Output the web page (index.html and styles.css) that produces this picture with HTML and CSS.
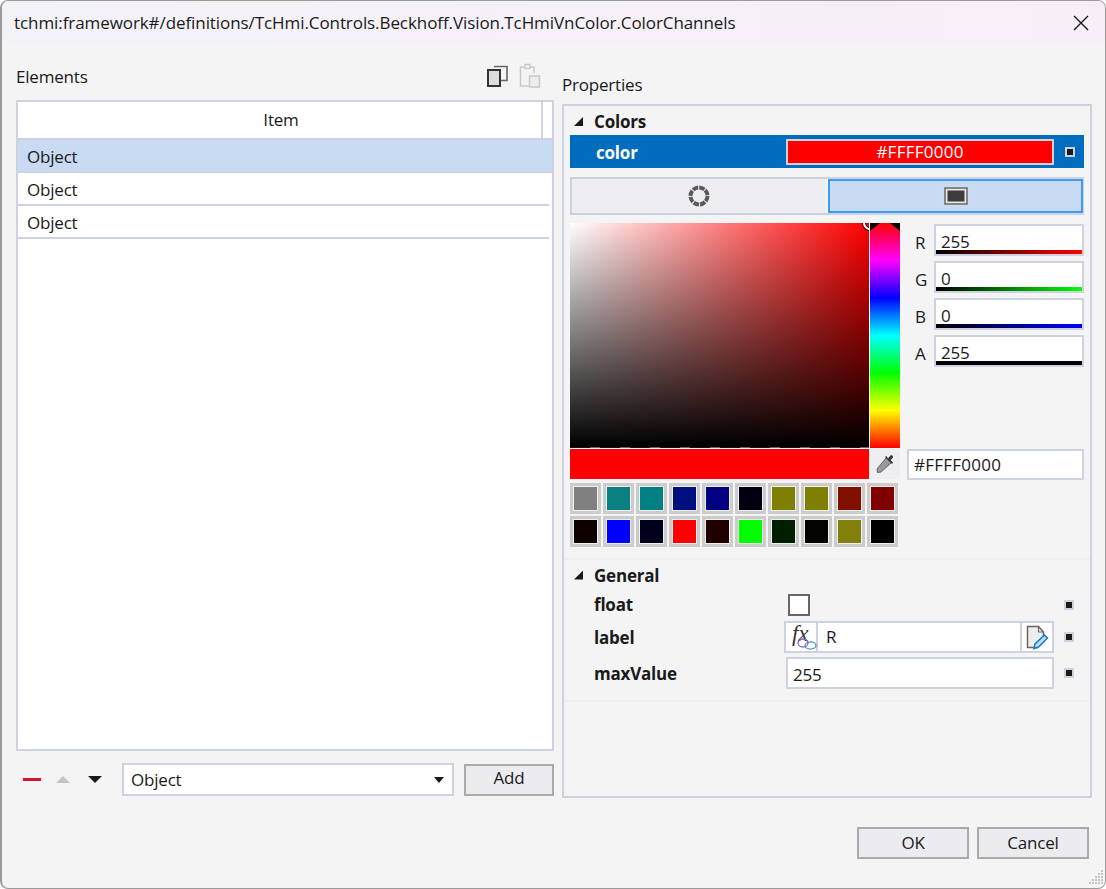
FILE: index.html
```html
<!DOCTYPE html>
<html lang="en">
<head>
    <meta charset="UTF-8">
    <title>ColorChannels</title>
    <link rel="stylesheet" href="styles.css">
</head>
<body>
    <div class="window">
        <div class="titlebar">
            <span class="title">tchmi:framework#/definitions/TcHmi.Controls.Beckhoff.Vision.TcHmiVnColor.ColorChannels</span>
            <svg class="close" width="16" height="16" viewBox="0 0 16 16"><path d="M1 1L15 15M15 1L1 15" stroke="#1a1a1a" stroke-width="1.4" fill="none"/></svg>
        </div>

        <div class="main">
            <div class="left">
                <div class="left-head">
                    <span class="caption">Elements</span>
                    <div class="head-icons">
                        <svg width="22" height="22" viewBox="0 0 22 22"><path d="M7 1.5H20V15.5H14" stroke="#666" stroke-width="1.6" fill="#f4f4f4"/><rect x="1" y="5" width="12" height="16" fill="#ddd" stroke="#333" stroke-width="2"/></svg>
                        <svg width="22" height="25" viewBox="0 0 22 25"><path d="M6 4H1.5V23H10M15 10V4H11" stroke="#c8c8c8" stroke-width="1.5" fill="none"/><rect x="6" y="1.5" width="5" height="4" fill="none" stroke="#c8c8c8" stroke-width="1.5"/><rect x="10.5" y="13" width="10" height="11" fill="#ececec" stroke="#c8c8c8" stroke-width="1.5"/></svg>
                    </div>
                </div>
                <div class="list">
                    <div class="list-header">
                        <div class="list-col">Item</div>
                        <div class="list-rest"></div>
                    </div>
                    <div class="list-row selected">Object</div>
                    <div class="list-row">Object</div>
                    <div class="list-row">Object</div>
                </div>
                <div class="left-foot">
                    <span class="minus"></span>
                    <span class="arrow-up"></span>
                    <span class="arrow-down"></span>
                    <div class="select">Object<span class="select-caret"></span></div>
                    <button class="btn btn-add">Add</button>
                </div>
            </div>

            <div class="right">
                <div class="caption right-caption">Properties</div>
                <div class="props">
                    <div class="group-head"><span class="tri"></span>Colors</div>
                    <div class="color-row">
                        <span class="prop-name">color</span>
                        <div class="color-value">#FFFF0000</div>
                        <span class="mark mark-blue"></span>
                    </div>
                    <div class="tabs">
                        <div class="tab">
                            <svg width="24" height="24" viewBox="0 0 24 24"><circle cx="12" cy="12" r="8.5" fill="none" stroke="#5a5a5a" stroke-width="4" stroke-dasharray="5.6 1.07"/></svg>
                        </div>
                        <div class="tab tab-active">
                            <svg width="26" height="20" viewBox="0 0 26 20"><rect x="0.5" y="0.5" width="25" height="19" fill="#dcdcdc"/><rect x="2" y="2" width="22" height="16" fill="#e8e8e8" stroke="#666" stroke-width="1.5"/><rect x="4.5" y="4.5" width="17" height="11" fill="#3c3c3c"/></svg>
                        </div>
                    </div>
                    <div class="picker">
                        <div class="sv">
                            <span class="sv-cursor"></span>
                        </div>
                        <div class="sv-gap"></div>
                        <div class="hue"></div>
                        <div class="channels">
                            <div class="channel"><span class="ch-label">R</span><div class="ch-input">255<span class="track track-r"></span></div></div>
                            <div class="channel"><span class="ch-label">G</span><div class="ch-input">0<span class="track track-g"></span></div></div>
                            <div class="channel"><span class="ch-label">B</span><div class="ch-input">0<span class="track track-b"></span></div></div>
                            <div class="channel"><span class="ch-label">A</span><div class="ch-input">255<span class="track track-a"></span></div></div>
                        </div>
                        <div class="preview"></div>
                        <div class="dropper">
                            <svg width="20" height="20" viewBox="0 0 20 20"><path d="M11 4L16 9L6 18L2.5 18.5L2 15Z" fill="#999" stroke="#666" stroke-width="1"/><path d="M10 3L17 10L18 8.5L15.5 6L18 3.5C18.5 2 17 0.5 15.5 1.5L13 4.5L11.5 2Z" fill="#333"/></svg>
                        </div>
                        <div class="hex-input">#FFFF0000</div>
                    </div>
                    <div class="swatches">
                        <span class="swatch" style="background-color:#808080"></span>
                        <span class="swatch" style="background-color:#0a8080"></span>
                        <span class="swatch" style="background-color:#008080"></span>
                        <span class="swatch" style="background-color:#000f80"></span>
                        <span class="swatch" style="background-color:#000080"></span>
                        <span class="swatch" style="background-color:#00000f"></span>
                        <span class="swatch" style="background-color:#808000"></span>
                        <span class="swatch" style="background-color:#808000"></span>
                        <span class="swatch" style="background-color:#800f00"></span>
                        <span class="swatch" style="background-color:#800000"></span>
                        <span class="swatch" style="background-color:#0f0000"></span>
                        <span class="swatch" style="background-color:#0000ff"></span>
                        <span class="swatch" style="background-color:#00001a"></span>
                        <span class="swatch" style="background-color:#ff0000"></span>
                        <span class="swatch" style="background-color:#1f0000"></span>
                        <span class="swatch" style="background-color:#00ff00"></span>
                        <span class="swatch" style="background-color:#001f00"></span>
                        <span class="swatch" style="background-color:#050500"></span>
                        <span class="swatch" style="background-color:#80800a"></span>
                        <span class="swatch" style="background-color:#000000"></span>
                    </div>
                    <div class="group general">
                        <div class="group-head"><span class="tri"></span>General</div>
                        <div class="prop-row row-float">
                            <span class="prop-name">float</span>
                            <div class="prop-value"><span class="checkbox"></span></div>
                            <span class="mark"></span>
                        </div>
                        <div class="prop-row row-label">
                            <span class="prop-name">label</span>
                            <div class="prop-value label-value">
                                <div class="fx-cell">
                                    <span class="fx">fx</span>
                                    <svg class="fx-links" width="20" height="13" viewBox="0 0 20 13"><ellipse cx="6" cy="5" rx="5" ry="4" fill="none" stroke="#8a5fc0" stroke-width="1.3"/><ellipse cx="13.5" cy="7.5" rx="5.5" ry="3.6" fill="none" stroke="#4a90d0" stroke-width="1.3"/></svg>
                                </div>
                                <div class="label-text">R</div>
                                <div class="doc-cell">
                                    <svg width="24" height="26" viewBox="0 0 24 26"><path d="M13 23.5H2.5V2.5H13.5L18.5 8V14" fill="#eee" stroke="#666" stroke-width="1.5"/><path d="M13.5 2.5V8H18.5" fill="none" stroke="#666" stroke-width="1.2"/><path d="M9 24.5L10 20L19.5 11L22.5 14L13.5 23Z" fill="#bcdcf5" stroke="#1a78c8" stroke-width="1.5"/></svg>
                                </div>
                            </div>
                            <span class="mark"></span>
                        </div>
                        <div class="prop-row row-max">
                            <span class="prop-name">maxValue</span>
                            <div class="prop-value max-value">255</div>
                            <span class="mark"></span>
                        </div>
                    </div>
                </div>
            </div>
        </div>

        <div class="footer">
            <button class="btn btn-foot">OK</button>
            <button class="btn btn-foot">Cancel</button>
        </div>
        <svg class="grip" width="15" height="15" viewBox="0 0 15 15" fill="#c4c4c4">
            <rect x="12" y="0" width="2" height="2"/>
            <rect x="9" y="3" width="2" height="2"/><rect x="12" y="3" width="2" height="2"/>
            <rect x="6" y="6" width="2" height="2"/><rect x="9" y="6" width="2" height="2"/><rect x="12" y="6" width="2" height="2"/>
            <rect x="3" y="9" width="2" height="2"/><rect x="6" y="9" width="2" height="2"/><rect x="9" y="9" width="2" height="2"/><rect x="12" y="9" width="2" height="2"/>
            <rect x="0" y="12" width="2" height="2"/><rect x="3" y="12" width="2" height="2"/><rect x="6" y="12" width="2" height="2"/><rect x="9" y="12" width="2" height="2"/><rect x="12" y="12" width="2" height="2"/>
        </svg>
    </div>
</body>
</html>
```

FILE: styles.css
```css
*{
    padding: 0;
    margin: 0;
    box-sizing: border-box;
    font-family: "Open Sans", "Noto Sans", sans-serif;
}
body{
    width: 1106px;
    height: 889px;
    overflow: hidden;
    background: #fff;
    color: #1a1a1a;
    font-size: 17px;
    letter-spacing: -0.2px;
}
.window{
    position: relative;
    width: 1106px;
    height: 889px;
    background: #f4f4f4;
    border: 1px solid #9a9a9a;
    border-left-width: 2px;
    border-radius: 8px;
    overflow: hidden;
    display: flex;
    flex-direction: column;
}
.titlebar{
    height: 43px;
    flex: none;
    display: flex;
    align-items: center;
    justify-content: space-between;
    padding: 0 16px 0 12px;
    background: linear-gradient(90deg, #f3f2f7, #f8eef7);
}
.title{
    font-size: 17px;
    letter-spacing: -0.08px;
}
.main{
    display: flex;
    gap: 8px;
    padding-left: 14px;
}
.left{
    width: 538px;
}
.left-head{
    height: 56px;
    display: flex;
    align-items: flex-end;
    justify-content: space-between;
    padding-bottom: 11px;
}
.caption{
    line-height: 24px;
}
.head-icons{
    display: flex;
    gap: 10px;
    align-items: flex-end;
    padding-right: 13px;
    margin-bottom: 1px;
}
.head-icons svg:first-child{
    margin-bottom: 1px;
}
.list{
    height: 651px;
    border: 2px solid #cdd1e0;
    background: #fff;
}
.list-header{
    display: flex;
    height: 38px;
    border-bottom: 2px solid #cdd1e0;
}
.list-col{
    width: 525px;
    padding-left: 3px;
    text-align: center;
    line-height: 36px;
    border-right: 2px solid #cdd1e0;
}
.list-row{
    height: 33px;
    line-height: 33px;
    padding-left: 9px;
    margin-right: 3px;
    border-bottom: 2px solid #cdd1e0;
}
.list-row.selected{
    background: #c8dbf3;
    margin-right: 0;
}
.left-foot{
    height: 33px;
    margin-top: 12px;
    display: flex;
    align-items: center;
}
.minus{
    width: 18px;
    height: 3px;
    margin-left: 7px;
    background: #d2142e;
}
.arrow-up{
    margin-left: 15px;
    border: 7px solid transparent;
    border-top: 0;
    border-bottom: 7px solid #c4c4c4;
}
.arrow-down{
    margin-left: 18px;
    margin-right: 20px;
    border: 7px solid transparent;
    border-bottom: 0;
    border-top: 7px solid #1a1a1a;
}
.select{
    position: relative;
    width: 332px;
    height: 33px;
    line-height: 29px;
    padding-left: 7px;
    border: 2px solid #cdd1e0;
    background: #fff;
}
.select-caret{
    position: absolute;
    right: 8px;
    top: 12px;
    border: 5px solid transparent;
    border-bottom: 0;
    border-top: 6px solid #1a1a1a;
}
.btn{
    font-size: 17px;
    letter-spacing: -0.2px;
    color: #1a1a1a;
    background: #ecebf0;
    border: 2px solid #aaa;
}
.btn-add{
    width: 90px;
    height: 32px;
    margin-left: 10px;
    padding-bottom: 5px;
}
.right{
    width: 530px;
}
.right-caption{
    height: 60px;
    padding-top: 29px;
}
.props{
    height: 694px;
    border: 2px solid #cdd1e0;
    padding: 0 6px;
}
.group-head{
    height: 29px;
    display: flex;
    align-items: center;
    font-weight: 700;
    padding-top: 2px;
}
.general .group-head{
    padding-top: 1px;
}
.tri{
    width: 9px;
    height: 9px;
    margin: 0 11px 0 4px;
    background: #1a1a1a;
    clip-path: polygon(100% 0, 100% 100%, 0 100%);
}
.color-row{
    height: 33px;
    display: flex;
    align-items: center;
    padding-left: 26px;
    background: #006cbe;
    color: #fff;
}
.prop-name{
    font-weight: 700;
    width: 190px;
    flex: none;
}
.color-row .prop-name{
    padding-top: 2px;
}
.color-value{
    width: 268px;
    height: 26px;
    line-height: 22px;
    text-align: center;
    letter-spacing: 0.25px;
    background: #ff0000;
    border: 2px solid #cdd1e0;
    color: #fff;
}
.mark{
    width: 10px;
    height: 10px;
    margin-left: 10px;
    background: #1a1a1a;
    border: 2px solid #cdd1e0;
}
.mark-blue{
    margin-left: 11px;
}
.tabs{
    display: flex;
    height: 38px;
    margin-top: 9px;
    border: 2px solid #cdd1e0;
}
.tab{
    width: 254px;
    flex: none;
    display: flex;
    align-items: center;
    justify-content: center;
    background: #eeeef2;
}
.tab-active{
    width: 255px;
    background: #c8dbf3;
    border: 2px solid #3d9bf5;
    margin-left: 2px;
}
.picker{
    display: grid;
    grid-template-columns: 299px 1px 30px 7px 177px;
    grid-template-rows: 226px 31px;
    margin-top: 8px;
}
.sv{
    position: relative;
    background:
        linear-gradient(#fff, #fff) bottom / 100% 1px no-repeat,
        repeating-linear-gradient(90deg, #111 0 20px, #666 20px 30px) left bottom 1px / 100% 1px no-repeat,
        linear-gradient(to top, #000, transparent) top / 100% 224px no-repeat,
        linear-gradient(to right, #fff, #f00) top / 100% 224px no-repeat;
    overflow: hidden;
}
.sv-cursor{
    position: absolute;
    right: -8px;
    top: -7px;
    width: 14px;
    height: 14px;
    border: 2px solid #fff;
    border-radius: 50%;
    box-shadow: 0 0 0 1px #000, inset 0 0 0 1px #000;
}
.sv-gap{
    background: #fff;
    height: 225px;
}
.hue{
    position: relative;
    height: 225px;
    background: linear-gradient(to bottom, #f00, #f0f 16.67%, #00f 33.33%, #0ff 50%, #0f0 66.67%, #ff0 83.33%, #f00);
}
.hue::before, .hue::after{
    content: "";
    position: absolute;
    top: 0;
    width: 10px;
    height: 8px;
    background: #000;
}
.hue::before{
    left: 0;
    clip-path: polygon(0 0, 100% 0, 0 100%);
}
.hue::after{
    right: 0;
    clip-path: polygon(0 0, 100% 0, 100% 100%);
}
.channels{
    grid-column: 4 / 6;
    padding-top: 1px;
    display: flex;
    flex-direction: column;
    gap: 5px;
}
.channel{
    display: flex;
    align-items: center;
    height: 32px;
}
.ch-label{
    width: 34px;
    padding: 4px 0 0 15px;
}
.ch-input{
    position: relative;
    flex: 1;
    height: 32px;
    line-height: 31px;
    padding-left: 5px;
    background: #fff;
    border: 2px solid #cdd1e0;
}
.track{
    position: absolute;
    left: 0;
    right: 0;
    bottom: 0;
    height: 4px;
}
.track-r{
    background: linear-gradient(90deg, #000, #f00);
}
.track-g{
    background: linear-gradient(90deg, #000, #0f0);
}
.track-b{
    background: linear-gradient(90deg, #000, #00f);
}
.track-a{
    background: #000;
}
.preview{
    height: 30px;
    background: #f00;
}
.dropper{
    grid-column: 2 / 4;
    height: 30px;
    display: flex;
    align-items: center;
    justify-content: center;
    background: #eeeef2;
}
.hex-input{
    grid-column: 5;
    height: 31px;
    line-height: 27px;
    padding-left: 5px;
    letter-spacing: 0.25px;
    background: #fff;
    border: 2px solid #cdd1e0;
}
.swatches{
    display: grid;
    grid-template-columns: repeat(10, 31px);
    column-gap: 2px;
    row-gap: 2px;
    margin-top: 3px;
}
.swatch{
    height: 31px;
    border: 3px solid #ccc;
    box-shadow: inset 0 0 0 1px #f0f0f0;
}
.general{
    margin: 11px -6px 0;
    padding: 0 6px;
    height: 144px;
    border-top: 2px solid #eeeef2;
    border-bottom: 2px solid #eeeef2;
}
.prop-row{
    display: flex;
    align-items: center;
    padding-left: 24px;
}
.row-float{
    height: 29px;
    margin-top: 1px;
}
.row-label{
    height: 32px;
    margin-top: 2px;
}
.row-max{
    height: 32px;
    margin-top: 4px;
}
.prop-value{
    width: 270px;
    flex: none;
}
.checkbox{
    display: block;
    width: 22px;
    height: 22px;
    margin-left: 4px;
    background: #fff;
    border: 2px solid #666;
}
.label-value{
    display: flex;
    height: 32px;
    background: #fff;
    border: 2px solid #cdd1e0;
}
.fx-cell{
    position: relative;
    width: 32px;
    border-right: 2px solid #cdd1e0;
}
.fx{
    position: absolute;
    left: 6px;
    top: -2px;
    font-family: "Liberation Serif", serif;
    font-style: italic;
    font-size: 23px;
    color: #333;
}
.fx-links{
    position: absolute;
    left: 11px;
    top: 15px;
}
.label-text{
    flex: 1;
    line-height: 28px;
    padding-left: 8px;
}
.doc-cell{
    width: 32px;
    display: flex;
    align-items: center;
    justify-content: center;
    border-left: 2px solid #cdd1e0;
}
.max-value{
    width: 268px;
    margin-left: 2px;
    height: 32px;
    line-height: 31px;
    padding-left: 5px;
    background: #fff;
    border: 2px solid #cdd1e0;
}
.footer{
    display: flex;
    justify-content: flex-end;
    gap: 8px;
    margin-top: 29px;
    padding-right: 16px;
}
.btn-foot{
    width: 112px;
    height: 32px;
    padding-bottom: 2px;
}
.grip{
    position: absolute;
    right: 1px;
    bottom: 3px;
}
```
